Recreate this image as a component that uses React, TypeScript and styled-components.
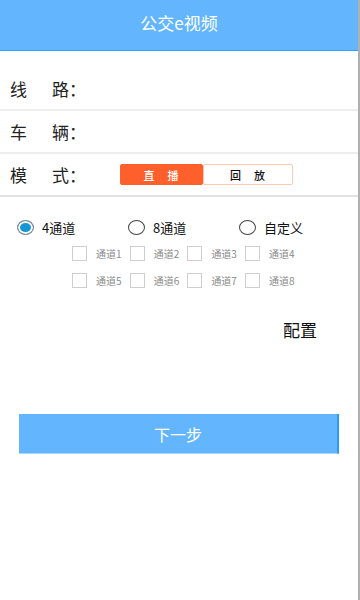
import React, { useState } from 'react'
import styled, { createGlobalStyle } from 'styled-components'

const GlobalStyle = createGlobalStyle`
  html, body {
    margin: 0;
    padding: 0;
    background: #fff;
  }
  body {
    font-family: 'Noto Sans CJK SC', 'Noto Sans', sans-serif;
  }
`

const channels = ['通道1', '通道2', '通道3', '通道4', '通道5', '通道6', '通道7', '通道8']
const modes = ['4通道', '8通道', '自定义']

export const App = () => {
  const [live, setLive] = useState(true)
  const [mode, setMode] = useState(0)

  return (
    <StyledPage>
      <GlobalStyle />
      <Header>公交e视频</Header>

      <FormBox>
        <Row>
          <Label><span>线</span>路：</Label>
        </Row>
        <Row>
          <Label><span>车</span>辆：</Label>
        </Row>
        <Row $strong>
          <Label><span>模</span>式：</Label>
          <Segment>
            <SegButton $active={live} $wide={83} onClick={() => setLive(true)}>直　播</SegButton>
            <SegButton $active={!live} $wide={90} onClick={() => setLive(false)}>回　放</SegButton>
          </Segment>
        </Row>
      </FormBox>

      <RadioGroup>
        {modes.map((m, i) => (
          <RadioItem key={m} onClick={() => setMode(i)}>
            <RadioDot $checked={mode === i} />
            {m}
          </RadioItem>
        ))}
      </RadioGroup>

      <ChannelGrid>
        {channels.map(c => (
          <ChannelItem key={c}>
            <CheckBox />
            {c}
          </ChannelItem>
        ))}
      </ChannelGrid>

      <ConfigLink>配置</ConfigLink>

      <NextButton>下一步</NextButton>
    </StyledPage>
  )
}

const StyledPage = styled.div`
  width: 358px;
  min-height: 600px;
  border-right: 2px solid #b0b0b0;
  background: #fff;
  color: #222;
`

const Header = styled.div`
  height: 50px;
  line-height: 46px;
  text-align: center;
  font-size: 17px;
  color: #fff;
  background-color: #63b6fe;
  border-bottom: 1px solid #3aa0f7;
`

const FormBox = styled.div`
  margin-top: 17px;
`

const Row = styled.div<{ $strong?: boolean }>`
  display: flex;
  align-items: center;
  height: 41px;
  border-bottom: 2px solid ${p => (p.$strong ? '#e2e2e2' : '#eeeeee')};
`

const Label = styled.div`
  display: flex;
  align-items: center;
  width: 120px;
  padding-left: 10px;
  box-sizing: border-box;
  font-size: 17px;
  color: #222;

  span {
    width: 42px;
  }
`

const Segment = styled.div`
  display: flex;
  height: 21px;
`

const SegButton = styled.div<{ $active: boolean; $wide: number }>`
  width: ${p => p.$wide}px;
  display: flex;
  align-items: center;
  justify-content: center;
  box-sizing: border-box;
  font-size: 11px;
  font-weight: 500;
  letter-spacing: 1px;
  color: ${p => (p.$active ? '#fff' : '#111')};
  background-color: ${p => (p.$active ? '#ff5f2b' : '#fff')};
  border: 1px solid ${p => (p.$active ? '#ff5f2b' : '#ffc9b5')};
  border-radius: 2px;
  cursor: pointer;
`

const RadioGroup = styled.div`
  display: grid;
  grid-template-columns: repeat(3, 111px);
  padding-left: 17px;
  margin-top: 20px;
  height: 20px;
`

const RadioItem = styled.div`
  display: flex;
  align-items: center;
  gap: 8px;
  font-size: 13px;
  color: #111;
  cursor: pointer;
`

const RadioDot = styled.span<{ $checked: boolean }>`
  width: 17px;
  height: 15px;
  border-radius: 50%;
  box-sizing: border-box;
  border: 1px solid ${p => (p.$checked ? '#8a8a8a' : '#444')};
  background-color: ${p => (p.$checked ? '#1596d6' : '#fff')};
  box-shadow: ${p => (p.$checked ? 'inset 0 0 0 2px #fff' : 'none')};
`

const ChannelGrid = styled.div`
  display: grid;
  grid-template-columns: repeat(4, 57.7px);
  grid-auto-rows: 27px;
  padding-left: 72px;
  margin-top: 3px;
`

const ChannelItem = styled.div`
  display: flex;
  align-items: center;
  gap: 9px;
  font-size: 10px;
  color: #8a8a8a;
`

const CheckBox = styled.span`
  width: 15px;
  height: 15px;
  box-sizing: border-box;
  border: 1px solid #cfcfcf;
  background: #fff;
`

const ConfigLink = styled.div`
  margin-top: 24px;
  padding-right: 41px;
  text-align: right;
  font-size: 17px;
  line-height: 24px;
  color: #111;
`

const NextButton = styled.div`
  margin: 72px 0 0 19px;
  width: 320px;
  height: 40px;
  box-sizing: border-box;
  display: flex;
  align-items: center;
  justify-content: center;
  font-size: 16px;
  color: #fff;
  background-color: #63b6fe;
  border-right: 2px solid #2b9cf5;
  border-bottom: 1px solid #a9d6ff;
  cursor: pointer;
`

export default App
